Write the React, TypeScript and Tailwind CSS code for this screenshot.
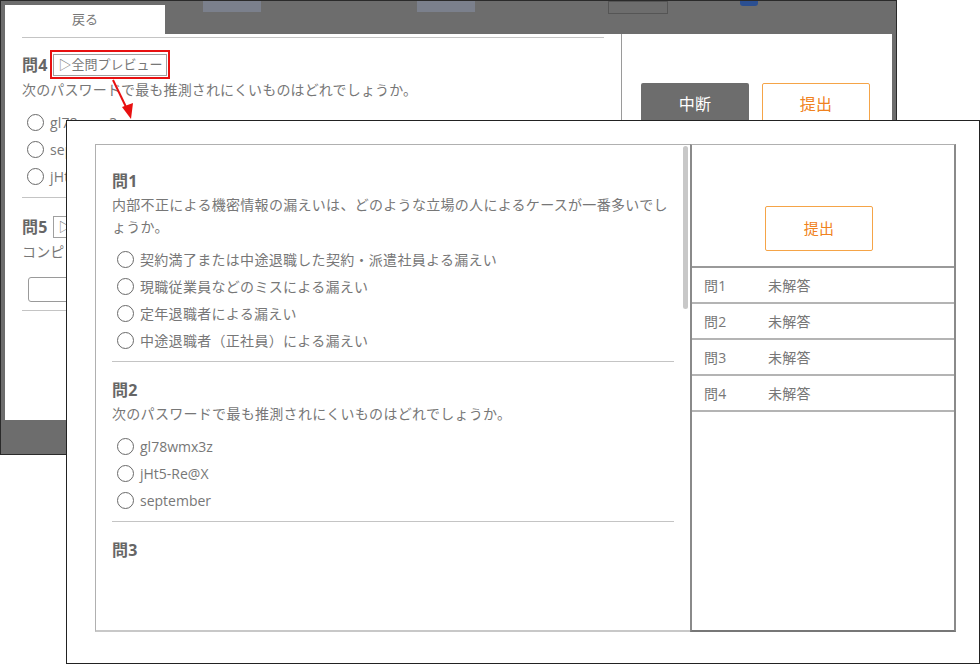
import React from "react";

const Radio = () => (
  <span className="inline-block w-[17px] h-[17px] rounded-full border-[1.5px] border-[#6a6a6a] bg-white shrink-0" />
);

const Option = ({ label }: { label: string }) => (
  <div className="h-[27px] flex items-center pl-[5px] gap-[6px] whitespace-nowrap">
    <Radio />
    <span>{label}</span>
  </div>
);

const Heading = ({ children }: { children: React.ReactNode }) => (
  <div className="h-[20px] leading-[20px] text-[16px] font-bold text-[#666]">{children}</div>
);

function BackWindow() {
  return (
    <div className="absolute left-0 top-0 w-[897px] h-[455px] border border-[#2a2a2a] bg-[#6d6d6d] flex flex-col overflow-hidden">
      <div className="relative h-[33px] shrink-0 flex items-end px-[4px]">
        <div className="absolute left-[202px] top-0 w-[58px] h-[11px] bg-[#7b808c]" />
        <div className="absolute left-[416px] top-0 w-[58px] h-[11px] bg-[#7b808c]" />
        <div className="absolute left-[607px] top-0 w-[60px] h-[13px] border border-[#555]" />
        <div className="absolute left-[739px] top-0 w-[18px] h-[5px] rounded-b-[3px] bg-[#2b4f91]" />
        <div className="w-[160px] h-[29px] bg-white flex items-center justify-center text-[13px] text-[#777]">戻る</div>
      </div>
      <div className="mx-[4px] h-[386px] bg-white flex text-[14px] text-[#777] tracking-[0.15px]">
        <div className="relative w-[617px] pl-[17px] pr-[17px] pt-[3px] border-r border-[#9a9a9a] overflow-hidden">
          <div className="border-b border-[#c4c4c4]" />
          <div className="pt-[16px] pb-[7px] border-b border-[#c4c4c4]">
            <div className="flex items-center gap-[6px]">
              <Heading>問4</Heading>
              <div className="relative">
                <div className="h-[22px] px-[4px] flex items-center border border-[#a0a0a0] text-[13px] text-[#777] tracking-normal">▷全問プレビュー</div>
                <div className="absolute -left-[3px] -top-[4px] -right-[3px] -bottom-[3px] border-2 border-[#e81010]" />
              </div>
            </div>
            <div className="mt-[3px] leading-[22px] whitespace-nowrap">次のパスワードで最も推測されにくいものはどれでしょうか。</div>
            <div className="mt-[8px]">
              <Option label="gl78wmx3z" />
              <Option label="september" />
              <Option label="jHt5-Re@X" />
            </div>
          </div>
          <div className="pt-[18px] pb-[8px] border-b border-[#c4c4c4]">
            <div className="flex items-center gap-[6px]">
              <Heading>問5</Heading>
              <div className="h-[22px] px-[4px] flex items-center border border-[#a0a0a0] text-[13px] text-[#777] tracking-normal">▷全問プレビュー</div>
            </div>
            <div className="mt-[3px] leading-[22px] whitespace-nowrap">コンピュータウイルスの感染経路として正しいものを答えてください。</div>
            <div className="mt-[14px] ml-[6px] w-[300px] h-[25px] border border-[#9a9a9a] rounded-[3px]" />
          </div>
        </div>
        <div className="flex-1 flex gap-[13px] pl-[19px] pt-[49px]">
          <div className="w-[108px] h-[42px] rounded-[2px] bg-[#6d6d6d] text-white text-[16px] flex items-center justify-center">中断</div>
          <div className="w-[108px] h-[42px] rounded-[2px] border border-[#f5a448] text-[#f08220] text-[16px] flex items-center justify-center">提出</div>
        </div>
      </div>
      <div className="flex-1" />
    </div>
  );
}

function FrontWindow() {
  const rows = ["問1", "問2", "問3", "問4"];
  return (
    <div className="absolute left-[66px] top-[120px] w-[914px] h-[544px] border border-[#222] bg-white pl-[28px] pt-[23px] pr-[23px] pb-[31px]">
      <div className="w-full h-full flex text-[14px] text-[#777] tracking-[0.3px]">
        <div className="relative w-[595px] border-l border-t border-[#b0b0b0] border-b-2 border-b-[#c8c8c8] overflow-hidden">
          <div className="absolute right-[2px] top-[1px] w-[5px] h-[163px] rounded-full bg-[#c8c8c8]" />
          <div className="px-[16px]">
            <div className="pt-[26px] pb-[7px] border-b border-[#c4c4c4]">
              <Heading>問1</Heading>
              <div className="mt-[3px] leading-[22px]">内部不正による機密情報の漏えいは、どのような立場の人によるケースが一番多いでしょうか。</div>
              <div className="mt-[8px]">
                <Option label="契約満了または中途退職した契約・派遣社員よる漏えい" />
                <Option label="現職従業員などのミスによる漏えい" />
                <Option label="定年退職者による漏えい" />
                <Option label="中途退職者（正社員）による漏えい" />
              </div>
            </div>
            <div className="pt-[18px] pb-[7px] border-b border-[#c4c4c4]">
              <Heading>問2</Heading>
              <div className="mt-[3px] leading-[22px]">次のパスワードで最も推測されにくいものはどれでしょうか。</div>
              <div className="mt-[8px] tracking-normal">
                <Option label="gl78wmx3z" />
                <Option label="jHt5-Re@X" />
                <Option label="september" />
              </div>
            </div>
            <div className="pt-[18px]">
              <Heading>問3</Heading>
            </div>
          </div>
        </div>
        <div className="flex-1 flex flex-col border-t border-[#b0b0b0] border-l-2 border-l-[#8a8a8a] border-r-2 border-r-[#8a8a8a] border-b-2 border-b-[#777]">
          <div className="h-[123px] border-b-2 border-[#9a9a9a] pl-[73px] pt-[61px]">
            <div className="w-[108px] h-[45px] rounded-[2px] border border-[#f5a448] text-[#f08220] text-[15px] flex items-center justify-center">提出</div>
          </div>
          {rows.map((r) => (
            <div key={r} className="h-[36px] shrink-0 border-b-2 border-[#b4b4b4] flex items-center pl-[12px]">
              <span className="w-[64px]">{r}</span>
              <span>未解答</span>
            </div>
          ))}
        </div>
      </div>
    </div>
  );
}

export default function App() {
  return (
    <div className="relative w-[980px] h-[664px] bg-white overflow-hidden font-['Open_Sans','Noto_Sans_CJK_JP',sans-serif]">
      <BackWindow />
      <FrontWindow />
      <svg className="absolute left-0 top-0" width="980" height="664" viewBox="0 0 980 664">
        <line x1="113" y1="80" x2="127" y2="109" stroke="#e81010" strokeWidth="2" />
        <polygon points="131,119 122,107 133,103" fill="#e81010" />
      </svg>
    </div>
  );
}
